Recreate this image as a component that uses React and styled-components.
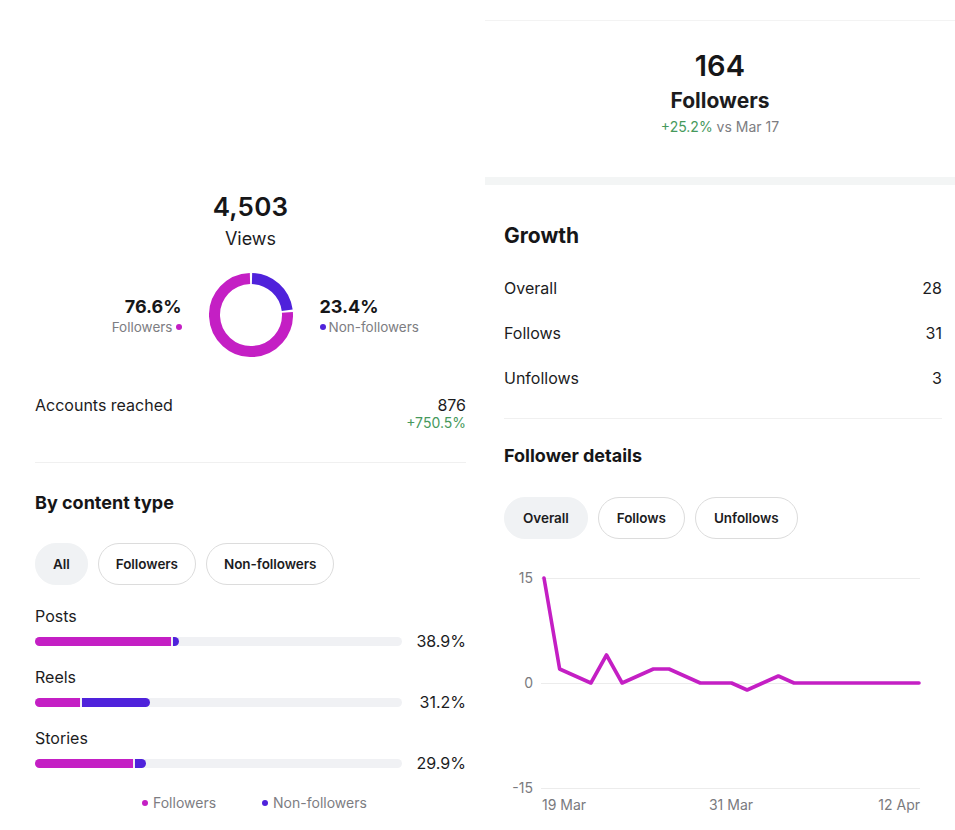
import React from "react";
import styled, { createGlobalStyle } from "styled-components";

const GlobalStyle = createGlobalStyle`
  html, body { margin: 0; padding: 0; background: #ffffff; }
  body { font-family: Inter, "Noto Sans", "Liberation Sans", sans-serif; color: #1c1c1e; }
  * { box-sizing: border-box; }
`;

const MAGENTA = "#c41fc4";
const PURPLE = "#4f22db";
const GREEN = "#46995c";
const GRAY = "#7d7d82";

const Page = styled.div`
  display: grid;
  grid-template-columns: 485px 470px;
  width: 955px;
  min-height: 830px;
  background: #fff;
`;

const LeftPanel = styled.section`
  display: flex;
  flex-direction: column;
  padding: 191px 19px 0 35px;
`;

const RightPanel = styled.section`
  display: flex;
  flex-direction: column;
  margin-top: 20px;
  border-top: 1px solid #f3f3f3;
`;

const BigNumber = styled.div`
  text-align: center;
  margin-top: ${(p) => p.$mt || 0}px;
  font-size: ${(p) => p.$size || 26}px;
  line-height: ${(p) => p.$lh || 32}px;
  font-weight: 600;
  letter-spacing: 0.2px;
  color: #161618;
`;

const SubTitle = styled.div`
  text-align: center;
  margin-top: ${(p) => p.$mt || 0}px;
  font-size: ${(p) => p.$size || 18}px;
  line-height: ${(p) => p.$lh || 24}px;
  font-weight: ${(p) => p.$weight || 400};
  color: #1c1c1e;
`;

const Delta = styled.div`
  text-align: center;
  margin-top: 3px;
  font-size: 14px;
  line-height: 18px;
  color: ${GRAY};
`;

const Green = styled.span`
  color: ${GREEN};
`;

const DonutRow = styled.div`
  display: grid;
  grid-template-columns: 1fr 84px 1fr;
  align-items: center;
  column-gap: 27px;
  margin-top: 22px;
`;

const SplitLabel = styled.div`
  display: flex;
  flex-direction: column;
  align-items: ${(p) => (p.$right ? "flex-start" : "flex-end")};
  padding-top: 2px;
`;

const SplitValue = styled.div`
  font-size: 18px;
  line-height: 22px;
  font-weight: 700;
  color: #161618;
`;

const SplitName = styled.div`
  display: flex;
  align-items: center;
  gap: 3px;
  font-size: 13.5px;
  line-height: 18px;
  color: ${GRAY};
`;

const Dot = styled.span`
  display: inline-block;
  width: 6px;
  height: 6px;
  border-radius: 50%;
  background: ${(p) => p.$color};
`;

const StatRow = styled.div`
  display: flex;
  justify-content: space-between;
  align-items: flex-start;
  margin-top: ${(p) => p.$mt || 0}px;
  font-size: 16px;
  line-height: 20px;
  color: #1c1c1e;
`;

const StatValue = styled.div`
  display: flex;
  flex-direction: column;
  align-items: flex-end;
`;

const SmallGreen = styled.div`
  font-size: 14px;
  line-height: 16px;
  color: ${GREEN};
`;

const Divider = styled.hr`
  border: 0;
  height: 1px;
  background: #f0f0f0;
  margin: ${(p) => p.$mt || 0}px 0 0 0;
`;

const SectionTitle = styled.h2`
  margin: ${(p) => p.$mt || 0}px 0 0 0;
  font-size: ${(p) => p.$size || 18}px;
  line-height: ${(p) => p.$lh || 24}px;
  font-weight: 700;
  color: #161618;
`;

const PillRow = styled.div`
  display: flex;
  gap: 10px;
  margin-top: ${(p) => p.$mt || 0}px;
`;

const Pill = styled.button`
  height: 42px;
  padding: 0 ${(p) => (p.$large ? 18 : 17)}px;
  border-radius: 21px;
  border: 1px solid ${(p) => (p.$active ? "#f0f2f4" : "#dcdcdc")};
  background: ${(p) => (p.$active ? "#f0f2f4" : "#ffffff")};
  font-family: inherit;
  font-size: 13.5px;
  font-weight: 600;
  letter-spacing: -0.05px;
  color: #1c1c1e;
  cursor: pointer;
`;

const BarLabel = styled.div`
  margin-top: ${(p) => p.$mt || 0}px;
  font-size: 16px;
  line-height: 20px;
  color: #1c1c1e;
`;

const BarRow = styled.div`
  display: grid;
  grid-template-columns: 1fr 64px;
  align-items: center;
  margin-top: 5px;
`;

const Track = styled.div`
  display: flex;
  gap: 2px;
  height: 9px;
  border-radius: 5px;
  background: #f0f1f4;
  overflow: hidden;
`;

const Fill = styled.div`
  height: 100%;
  background: ${(p) => p.$color};
  &:last-child {
    border-radius: 0 5px 5px 0;
  }
`;

const Percent = styled.div`
  text-align: right;
  font-size: 16px;
  line-height: 20px;
  color: #1c1c1e;
`;

const Legend = styled.div`
  display: flex;
  gap: 46px;
  margin-top: 21px;
  padding-left: 107px;
`;

const LegendItem = styled.div`
  display: flex;
  align-items: center;
  gap: 5px;
  font-size: 14px;
  line-height: 18px;
  color: ${GRAY};
`;

const Band = styled.div`
  height: 8px;
  background: #f3f5f5;
  margin-top: 41px;
`;

const RightBody = styled.div`
  display: flex;
  flex-direction: column;
  padding: 0 13px 0 19px;
`;

const ChartWrap = styled.div`
  margin-top: 26px;
  margin-left: -19px;
`;

function arcPath(cx, cy, r, a0, a1) {
  const pt = (a) => {
    const rad = (a * Math.PI) / 180;
    return [cx + r * Math.sin(rad), cy - r * Math.cos(rad)];
  };
  const [x0, y0] = pt(a0);
  const [x1, y1] = pt(a1);
  const large = a1 - a0 > 180 ? 1 : 0;
  return `M ${x0.toFixed(2)} ${y0.toFixed(2)} A ${r} ${r} 0 ${large} 1 ${x1.toFixed(2)} ${y1.toFixed(2)}`;
}

function Donut() {
  const split = 0.234 * 360;
  const g = 1.6;
  return (
    <svg width="84" height="84" viewBox="0 0 84 84">
      <path d={arcPath(42, 42, 36.5, g, split - g)} fill="none" stroke={PURPLE} strokeWidth="11" />
      <path d={arcPath(42, 42, 36.5, split + g, 360 - g)} fill="none" stroke={MAGENTA} strokeWidth="11" />
    </svg>
  );
}

const series = [15, 2, 1, 0, 4, 0, 1, 2, 2, 1, 0, 0, 0, -1, 0, 1, 0, 0, 0, 0, 0, 0, 0, 0, 0];

function LineChart() {
  const x0 = 59;
  const step = 375 / 24;
  const yZero = 118;
  const unit = 7;
  const pts = series
    .map((v, i) => `${(x0 + i * step).toFixed(2)},${(yZero - v * unit).toFixed(2)}`)
    .join(" ");
  const grid = [13, 118, 223];
  const ylabels = ["15", "0", "-15"];
  const textStyle = { fontFamily: "Inter, 'Noto Sans', sans-serif", fontSize: 14, fill: "#7a7a7e" };
  return (
    <svg width="470" height="250" viewBox="0 0 470 250">
      {grid.map((y, i) => (
        <g key={y}>
          <line x1="56" x2="435" y1={y + 0.5} y2={y + 0.5} stroke="#ececec" strokeWidth="1" />
          <text x="48" y={y + 5} textAnchor="end" style={textStyle}>
            {ylabels[i]}
          </text>
        </g>
      ))}
      <polyline points={pts} fill="none" stroke={MAGENTA} strokeWidth="3.6" strokeLinejoin="round" strokeLinecap="round" />
      <text x="57" y="245" textAnchor="start" style={textStyle}>19 Mar</text>
      <text x="246" y="245" textAnchor="middle" style={textStyle}>31 Mar</text>
      <text x="435" y="245" textAnchor="end" style={textStyle}>12 Apr</text>
    </svg>
  );
}

const bars = [
  { name: "Posts", f: 37.1, n: 1.6, pct: "38.9%", mt: 21 },
  { name: "Reels", f: 12.3, n: 18.5, pct: "31.2%", mt: 16 },
  { name: "Stories", f: 26.7, n: 3.0, pct: "29.9%", mt: 16 },
];

const growth = [
  { label: "Overall", value: "28", mt: 28 },
  { label: "Follows", value: "31", mt: 25 },
  { label: "Unfollows", value: "3", mt: 25 },
];

export default function App() {
  return (
    <>
      <GlobalStyle />
      <Page>
        <LeftPanel>
          <BigNumber>4,503</BigNumber>
          <SubTitle $mt={4}>Views</SubTitle>
          <DonutRow>
            <SplitLabel>
              <SplitValue>76.6%</SplitValue>
              <SplitName>
                Followers <Dot $color={MAGENTA} />
              </SplitName>
            </SplitLabel>
            <Donut />
            <SplitLabel $right>
              <SplitValue>23.4%</SplitValue>
              <SplitName>
                <Dot $color={PURPLE} />Non-followers
              </SplitName>
            </SplitLabel>
          </DonutRow>
          <StatRow $mt={38}>
            <span>Accounts reached</span>
            <StatValue>
              <span>876</span>
              <SmallGreen>+750.5%</SmallGreen>
            </StatValue>
          </StatRow>
          <Divider $mt={31} />
          <SectionTitle $mt={28}>By content type</SectionTitle>
          <PillRow $mt={28}>
            <Pill $active>All</Pill>
            <Pill>Followers</Pill>
            <Pill>Non-followers</Pill>
          </PillRow>
          {bars.map((b) => (
            <React.Fragment key={b.name}>
              <BarLabel $mt={b.mt}>{b.name}</BarLabel>
              <BarRow>
                <Track>
                  <Fill $color={MAGENTA} style={{ width: `${b.f}%` }} />
                  <Fill $color={PURPLE} style={{ width: `${b.n}%` }} />
                </Track>
                <Percent>{b.pct}</Percent>
              </BarRow>
            </React.Fragment>
          ))}
          <Legend>
            <LegendItem>
              <Dot $color={MAGENTA} />Followers
            </LegendItem>
            <LegendItem>
              <Dot $color={PURPLE} />Non-followers
            </LegendItem>
          </Legend>
        </LeftPanel>

        <RightPanel>
          <BigNumber $mt={27} $size={29} $lh={36}>164</BigNumber>
          <SubTitle $mt={3} $size={21} $lh={28} $weight={700}>Followers</SubTitle>
          <Delta>
            <Green>+25.2%</Green> vs Mar 17
          </Delta>
          <Band />
          <RightBody>
            <SectionTitle $mt={37} $size={21} $lh={28}>Growth</SectionTitle>
            {growth.map((g) => (
              <StatRow key={g.label} $mt={g.mt}>
                <span>{g.label}</span>
                <span>{g.value}</span>
              </StatRow>
            ))}
            <Divider $mt={30} />
            <SectionTitle $mt={25}>Follower details</SectionTitle>
            <PillRow $mt={29}>
              <Pill $active $large>Overall</Pill>
              <Pill $large>Follows</Pill>
              <Pill $large>Unfollows</Pill>
            </PillRow>
            <ChartWrap>
              <LineChart />
            </ChartWrap>
          </RightBody>
        </RightPanel>
      </Page>
    </>
  );
}
